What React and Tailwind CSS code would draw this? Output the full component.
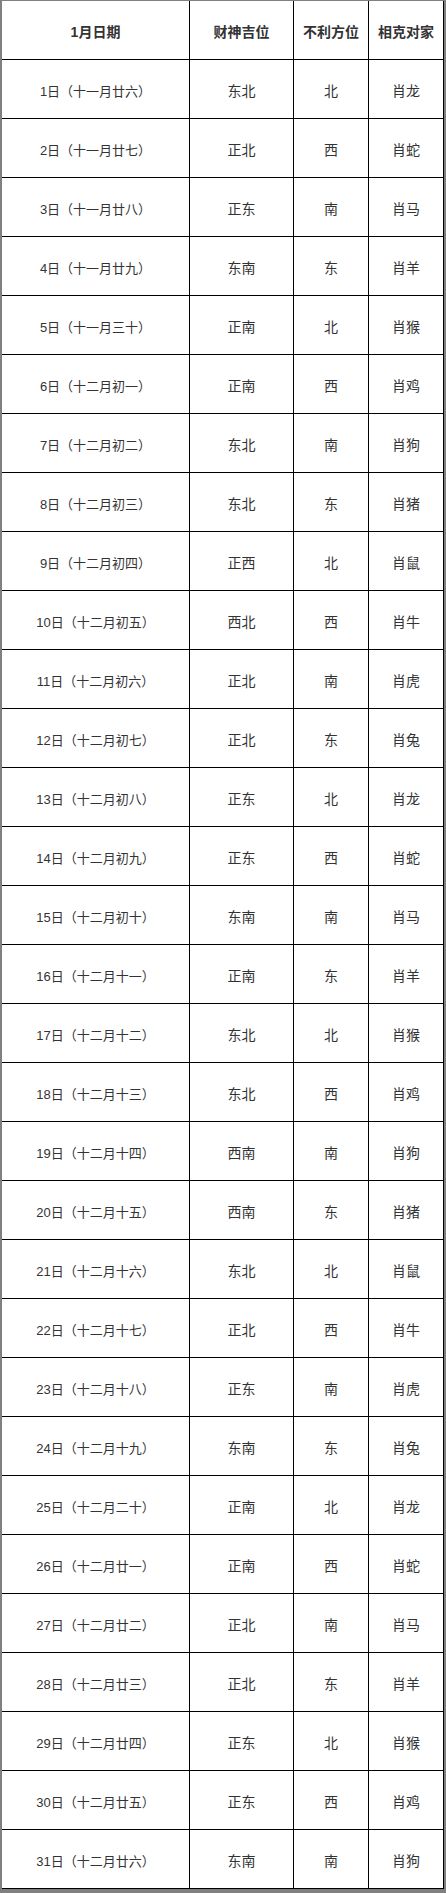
const rows = [
  ["1日（十一月廿六）", "东北", "北", "肖龙"],
  ["2日（十一月廿七）", "正北", "西", "肖蛇"],
  ["3日（十一月廿八）", "正东", "南", "肖马"],
  ["4日（十一月廿九）", "东南", "东", "肖羊"],
  ["5日（十一月三十）", "正南", "北", "肖猴"],
  ["6日（十二月初一）", "正南", "西", "肖鸡"],
  ["7日（十二月初二）", "东北", "南", "肖狗"],
  ["8日（十二月初三）", "东北", "东", "肖猪"],
  ["9日（十二月初四）", "正西", "北", "肖鼠"],
  ["10日（十二月初五）", "西北", "西", "肖牛"],
  ["11日（十二月初六）", "正北", "南", "肖虎"],
  ["12日（十二月初七）", "正北", "东", "肖兔"],
  ["13日（十二月初八）", "正东", "北", "肖龙"],
  ["14日（十二月初九）", "正东", "西", "肖蛇"],
  ["15日（十二月初十）", "东南", "南", "肖马"],
  ["16日（十二月十一）", "正南", "东", "肖羊"],
  ["17日（十二月十二）", "东北", "北", "肖猴"],
  ["18日（十二月十三）", "东北", "西", "肖鸡"],
  ["19日（十二月十四）", "西南", "南", "肖狗"],
  ["20日（十二月十五）", "西南", "东", "肖猪"],
  ["21日（十二月十六）", "东北", "北", "肖鼠"],
  ["22日（十二月十七）", "正北", "西", "肖牛"],
  ["23日（十二月十八）", "正东", "南", "肖虎"],
  ["24日（十二月十九）", "东南", "东", "肖兔"],
  ["25日（十二月二十）", "正南", "北", "肖龙"],
  ["26日（十二月廿一）", "正南", "西", "肖蛇"],
  ["27日（十二月廿二）", "正北", "南", "肖马"],
  ["28日（十二月廿三）", "正北", "东", "肖羊"],
  ["29日（十二月廿四）", "正东", "北", "肖猴"],
  ["30日（十二月廿五）", "正东", "西", "肖鸡"],
  ["31日（十二月廿六）", "东南", "南", "肖狗"],
];

const headers = ["1月日期", "财神吉位", "不利方位", "相克对家"];

function Cell({ children, bold, small }) {
  return (
    <div
      className={
        "h-[59px] border-r border-b border-black bg-white flex items-center justify-center pt-[5px] text-[#333] " +
        (bold ? "font-bold text-[14px] pt-[2px]" : small ? "text-[13px]" : "text-[14px]")
      }
    >
      {children}
    </div>
  );
}

export default function App() {
  return (
    <div
      className="w-[446px] bg-[#808080] pt-[1px] pl-[2px] pr-[2px] pb-[4px]"
      style={{ fontFamily: '"Liberation Sans", "Noto Sans CJK SC", sans-serif' }}
    >
      <div className="grid grid-cols-[188px_104px_75px_75px]">
        {headers.map((h) => (
          <Cell key={h} bold>
            {h}
          </Cell>
        ))}
        {rows.map((r) => (
          <div key={r[0]} className="contents">
            <Cell small>{r[0]}</Cell>
            <Cell>{r[1]}</Cell>
            <Cell>{r[2]}</Cell>
            <Cell>{r[3]}</Cell>
          </div>
        ))}
      </div>
    </div>
  );
}
